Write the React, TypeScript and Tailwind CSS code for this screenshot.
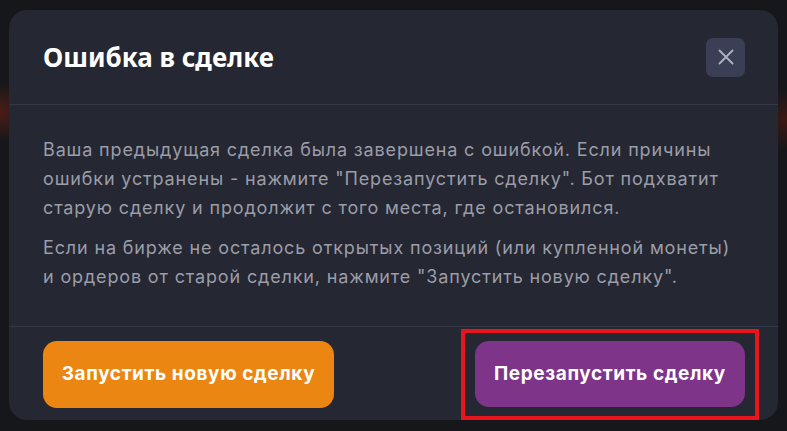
import React from "react";

export default function App() {
  return (
    <div className="w-[787px] h-[431px] overflow-hidden bg-[#16171a] bg-[radial-gradient(ellipse_40px_30px_at_0px_112px,#4a1c16,transparent),radial-gradient(ellipse_30px_30px_at_787px_120px,#3e1914,transparent)] pt-[10px] px-[9px]" style={{ fontFamily: "Inter, 'Noto Sans', sans-serif" }}>
      <div className="w-[769px] h-[410px] rounded-[18px] bg-[#252732] flex flex-col">
        <div className="h-[95px] flex items-center justify-between pl-[34px] pr-[33px] border-b border-[#343747]">
          <h2 className="text-[26px] font-bold text-white" style={{ fontFamily: "'Noto Sans', Inter, sans-serif" }}>Ошибка в сделке</h2>
          <button className="w-[39px] h-[39px] rounded-[7px] bg-[#3b3f55] flex items-center justify-center">
            <svg width="16" height="16" viewBox="0 0 16 16" fill="none">
              <path d="M1.5 1.5 L14.5 14.5 M14.5 1.5 L1.5 14.5" stroke="#aeb2c4" strokeWidth="1.8" strokeLinecap="round" />
            </svg>
          </button>
        </div>
        <div className="flex-1 pl-[34px] pr-[20px] pt-[31px] text-[18px] leading-[28.8px] tracking-[0.85px] text-[#9b9da8] whitespace-nowrap">
          <p>
            Ваша предыдущая сделка была завершена с ошибкой. Если причины<br />
            ошибки устранены - нажмите "Перезапустить сделку". Бот подхватит<br />
            старую сделку и продолжит с того места, где остановился.
          </p>
          <p className="mt-[12px]">
            Если на бирже не осталось открытых позиций (или купленной монеты)<br />
            и ордеров от старой сделки, нажмите "Запустить новую сделку".
          </p>
        </div>
        <div className="h-[94px] border-t border-[#343747] flex items-start justify-between pl-[34px] pr-[33px] pt-[14px]">
          <button className="w-[291px] h-[67px] rounded-[14px] bg-[#ec8613] text-white text-[19px] tracking-[0.6px] font-bold">
            Запустить новую сделку
          </button>
          <div className="relative">
            <div className="absolute -left-[14px] -right-[14px] -top-[12px] -bottom-[13px] border-[4px] border-[#e8151c] pointer-events-none" />
            <button className="w-[270px] h-[66px] rounded-[14px] bg-[#7d3489] text-white text-[19px] tracking-[0.6px] font-bold">
              Перезапустить сделку
            </button>
          </div>
        </div>
      </div>
    </div>
  );
}
